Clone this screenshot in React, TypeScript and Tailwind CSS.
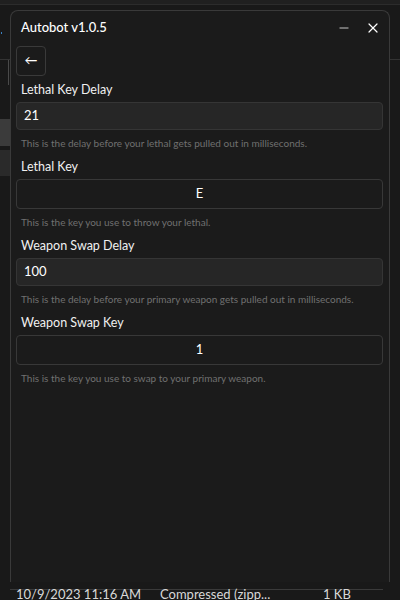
import { Minus, X } from "lucide-react";

const font = { fontFamily: '"Segoe UI", Lato, "Noto Sans", sans-serif' };

type Field = {
  label: string;
  value: string;
  help: string;
  kind: "number" | "key";
};

const fields: Field[] = [
  {
    label: "Lethal Key Delay",
    value: "21",
    help: "This is the delay before your lethal gets pulled out in milliseconds.",
    kind: "number",
  },
  {
    label: "Lethal Key",
    value: "E",
    help: "This is the key you use to throw your lethal.",
    kind: "key",
  },
  {
    label: "Weapon Swap Delay",
    value: "100",
    help: "This is the delay before your primary weapon gets pulled out in milliseconds.",
    kind: "number",
  },
  {
    label: "Weapon Swap Key",
    value: "1",
    help: "This is the key you use to swap to your primary weapon.",
    kind: "key",
  },
];

const SettingField = ({ field }: { field: Field }) => (
  <div className="flex flex-col">
    <label className="text-[12.5px] leading-[18px] text-[#f0f0f0] pl-[5px] mb-[3px]">
      {field.label}
    </label>
    {field.kind === "number" ? (
      <div className="h-[28px] rounded-[4px] border border-[#353535] bg-[#262626] flex items-center px-[7px] text-[13px] text-white">
        {field.value}
      </div>
    ) : (
      <div className="h-[30px] rounded-[4px] border border-[#383838] bg-[#1b1b1b] flex items-center justify-center text-[13px] text-white">
        {field.value}
      </div>
    )}
    <p className="text-[10px] leading-[14px] text-[#707070] pl-[5px] mt-[6px] mb-[8px]">
      {field.help}
    </p>
  </div>
);

const App = () => {
  return (
    <div className="relative w-[400px] h-[600px] overflow-hidden bg-[#191919]" style={font}>
      {/* explorer behind the window */}
      <div className="absolute left-0 top-0 w-full h-[5px] bg-[#202020] border-b border-[#2c2c2c]" />
      <div className="absolute left-[1px] top-[32px] w-[1px] h-[2px] bg-[#3b82c4]" />
      <div className="absolute left-0 top-[59px] w-[10px] h-[1px] bg-[#333333]" />
      <div className="absolute right-0 top-[59px] w-[10px] h-[1px] bg-[#333333]" />
      <div className="absolute left-[8px] top-[60px] w-[1px] h-[25px] bg-[#4a4a4a]" />
      <div className="absolute left-0 top-[119px] w-[10px] h-[27px] bg-[#3b3b3b]" />
      <div className="absolute left-0 top-[150px] w-[10px] h-[26px] bg-[#2a2a2a]" />
      <div className="absolute left-[10px] top-[589px] w-[373px] h-[1px] bg-[#3a3a3a]" />
      <div className="absolute left-0 top-[585px] w-full flex text-[13px] text-[#d8d8d8] leading-[18px]">
        <span className="ml-[16px] w-[144px]">10/9/2023 11:16 AM</span>
        <span className="w-[163px]">Compressed (zipp...</span>
        <span>1 KB</span>
      </div>

      {/* window */}
      <div className="absolute left-[10px] top-[10px] w-[380px] h-[572px] rounded-t-[8px] border border-b-0 border-[#3a3a3a] bg-[#1b1b1b] flex flex-col">
        <div className="h-[34px] flex items-center pl-[10px] pr-[8px]">
          <span className="text-[13px] font-medium text-white">Autobot v1.0.5</span>
          <div className="ml-auto flex items-center gap-[14px]">
            <Minus className="w-[14px] h-[14px] text-white" strokeWidth={1.3} />
            <X className="w-[16px] h-[16px] text-white" strokeWidth={1.8} />
          </div>
        </div>
        <div className="flex flex-col px-[5px] pr-[6px]">
          <button className="w-[30px] h-[30px] rounded-[4px] border border-[#3a3a3a] flex items-center justify-center text-white text-[13px] mt-[1px] mb-[5px]">
            ←
          </button>
          {fields.map((f) => (
            <SettingField key={f.label} field={f} />
          ))}
        </div>
      </div>
    </div>
  );
};

export default App;
